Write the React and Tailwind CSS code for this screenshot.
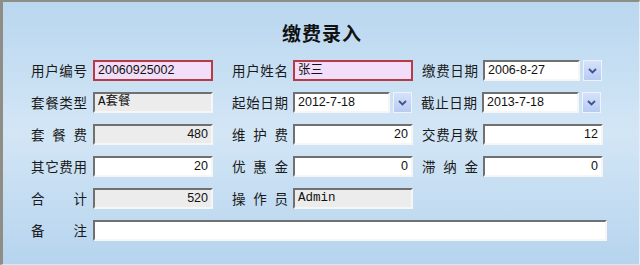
import React from "react"

const cjk = { fontFamily: '"Noto Sans CJK SC", "Liberation Sans", sans-serif' }

function Label({ children }) {
    return (
        <div
            className="w-[56px] shrink-0 text-[13.5px] leading-[21px] text-[#1a1a1a] [text-align-last:justify]"
            style={cjk}
        >
            {children}
        </div>
    )
}

function Field({ value = "", kind = "white", align = "left", w = "w-[120px]", mono = false, ml = "" }) {
    const skin =
        kind === "pink"
            ? "border-2 border-[#b83a44] bg-[#f2def9]"
            : "border-2 border-t-[#707070] border-l-[#707070] border-r-[#f6f6f6] border-b-[#f6f6f6] " +
              (kind === "gray" ? "bg-[#ececec]" : "bg-white")
    return (
        <div
            className={`${w} ${ml} h-[21px] shrink-0 ${skin} px-[3px] flex items-center text-[12.5px] text-[#111] ${
                align === "right" ? "justify-end" : "justify-start"
            }`}
            style={{
                fontFamily: mono
                    ? '"Liberation Mono", "Noto Sans CJK SC", monospace'
                    : '"Liberation Sans", "Noto Sans CJK SC", sans-serif',
            }}
        >
            {value}
        </div>
    )
}

function DateField({ value, ml = "" }) {
    return (
        <div className={`flex items-center ${ml}`}>
            <Field value={value} w="w-[97px]" />
            <div className="ml-[3px] w-[19px] h-[21px] border border-[#eef3fb] bg-gradient-to-b from-[#d6e2fa] to-[#b8cbf2] flex items-center justify-center">
                <svg width="9" height="6" viewBox="0 0 9 6">
                    <polyline points="1,1 4.5,4.5 8,1" fill="none" stroke="#3c5590" strokeWidth="1.8" />
                </svg>
            </div>
        </div>
    )
}

export default function App() {
    return (
        <section className="w-[640px] h-[265px] box-border border-t-2 border-l-[3px] border-r border-b border-t-[#8e8e86] border-l-[#8e8e86] border-r-[#e4eef8] border-b-[#d8e6f2] bg-gradient-to-b from-[#b9d7ef] via-[#d3e6f6] to-[#b6d4ee] overflow-hidden">
            <header className="h-[58px] flex justify-center items-center pl-[2px] pt-[4px]">
                <h2 className="text-[19px] font-bold text-[#111] tracking-[1px]" style={cjk}>
                    缴费录入
                </h2>
            </header>
            <main className="flex flex-col gap-[11px] pl-[28px]">
                <div className="flex items-center">
                    <Label>用户编号</Label>
                    <Field value="20060925002" kind="pink" ml="ml-[6px]" />
                    <div className="ml-[19px]"><Label>用户姓名</Label></div>
                    <Field value="张三" kind="pink" ml="ml-[5px]" />
                    <div className="ml-[9px]"><Label>缴费日期</Label></div>
                    <DateField value="2006-8-27" ml="ml-[5px]" />
                </div>
                <div className="flex items-center">
                    <Label>套餐类型</Label>
                    <Field value="A套餐" kind="gray" ml="ml-[6px]" mono />
                    <div className="ml-[19px]"><Label>起始日期</Label></div>
                    <DateField value="2012-7-18" ml="ml-[5px]" />
                    <div className="ml-[9px]"><Label>截止日期</Label></div>
                    <DateField value="2013-7-18" ml="ml-[5px]" />
                </div>
                <div className="flex items-center">
                    <Label>套 餐 费</Label>
                    <Field value="480" kind="gray" align="right" ml="ml-[6px]" />
                    <div className="ml-[19px]"><Label>维 护 费</Label></div>
                    <Field value="20" align="right" ml="ml-[5px]" />
                    <div className="ml-[9px]"><Label>交费月数</Label></div>
                    <Field value="12" align="right" ml="ml-[5px]" />
                </div>
                <div className="flex items-center">
                    <Label>其它费用</Label>
                    <Field value="20" align="right" ml="ml-[6px]" />
                    <div className="ml-[19px]"><Label>优 惠 金</Label></div>
                    <Field value="0" align="right" ml="ml-[5px]" />
                    <div className="ml-[9px]"><Label>滞 纳 金</Label></div>
                    <Field value="0" align="right" ml="ml-[5px]" />
                </div>
                <div className="flex items-center">
                    <Label>合 计</Label>
                    <Field value="520" kind="gray" align="right" ml="ml-[6px]" />
                    <div className="ml-[19px]"><Label>操 作 员</Label></div>
                    <Field value="Admin" kind="gray" ml="ml-[5px]" mono />
                </div>
                <div className="flex items-center">
                    <Label>备 注</Label>
                    <Field value="" w="w-[514px]" ml="ml-[6px]" />
                </div>
            </main>
        </section>
    )
}
